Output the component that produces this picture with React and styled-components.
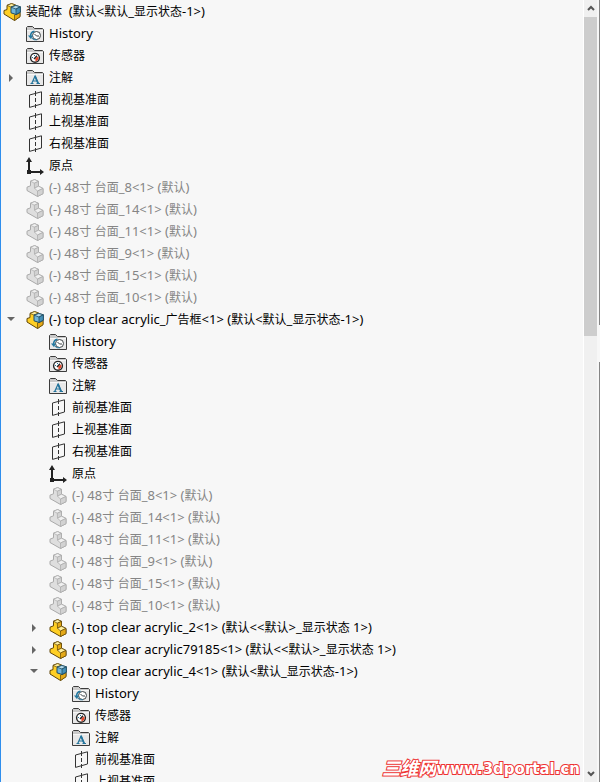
import React, { useState } from 'react';
import styled, { createGlobalStyle } from 'styled-components';

const planes = [
  { icon: 'plane', label: '前视基准面' },
  { icon: 'plane', label: '上视基准面' },
  { icon: 'plane', label: '右视基准面' },
  { icon: 'origin', label: '原点' },
];

const tableParts = ['8', '14', '11', '9', '15', '10'].map(number => ({
  icon: 'part',
  label: `(-) 48寸 台面_${number}<1> (默认)`,
  suppressed: true,
}));

const folders = [
  { icon: 'history', label: 'History' },
  { icon: 'sensor', label: '传感器' },
  { icon: 'note', label: '注解' },
];

const tree = [
  folders[0],
  folders[1],
  { ...folders[2], expandable: true },
  ...planes,
  ...tableParts,
  {
    icon: 'assembly',
    label: '(-) top clear acrylic_广告框<1> (默认<默认_显示状态-1>)',
    expandable: true,
    children: [
      ...folders,
      ...planes,
      ...tableParts,
      { icon: 'part', label: '(-) top clear acrylic_2<1> (默认<<默认>_显示状态 1>)', expandable: true },
      { icon: 'part', label: '(-) top clear acrylic79185<1> (默认<<默认>_显示状态 1>)', expandable: true },
      {
        icon: 'assembly',
        label: '(-) top clear acrylic_4<1> (默认<默认_显示状态-1>)',
        expandable: true,
        children: [...folders, ...planes],
      },
    ],
  },
];

const Folder = ({ children }) => (
  <>
    <path d="M0.5 16.5V2.5L1.5 1.5H6.5L8.5 3.5H16.5L17.5 4.5V16.5Z" fill="#c9c9c9" stroke="#3c3c3c" />
    <path d="M1 6H17V16H1Z" fill="#e8e8e8" />
    <path d="M1 5.5H17" stroke="#f7f7f7" />
    {children}
  </>
);

const HistoryIcon = () => (
  <Folder>
    <circle cx="10.5" cy="10.5" r="4" fill="#fff" stroke="#3f4548" />
    <path d="M8.5 9L10.5 11H13" fill="none" stroke="#3f4548" />
    <path d="M8.5 6.2C5.5 6.6 4.6 8.4 4.6 11" fill="none" stroke="#2579a0" strokeWidth="1.6" />
    <path d="M2 10.5H7.3L4.8 14Z" fill="#2579a0" />
    <path d="M5.5 13Q8 15.5 11 14.8" fill="none" stroke="#2579a0" />
  </Folder>
);

const SensorIcon = () => (
  <Folder>
    <circle cx="9" cy="10.8" r="4.4" fill="#fff" stroke="#252525" strokeWidth="1.4" />
    <path d="M9.2 11L12.2 9.4A3.5 3.5 0 0 1 9.5 14.4Z" fill="#e8492c" />
    <path d="M8 12L11 8.8" stroke="#252525" strokeWidth="1.4" />
    <path d="M6 10.5H7M8.5 8V9" stroke="#2579a0" />
  </Folder>
);

const NoteIcon = () => (
  <Folder>
    <path d="M5.7 14.5L9.1 7L12.2 14.5M7 12H11" fill="none" stroke="#24749c" strokeWidth="1.2" />
    <path d="M9 7L12.2 14.5" stroke="#24749c" strokeWidth="1.8" />
    <path d="M4.5 14.5H7.5M10.5 14.5H14" stroke="#24749c" />
  </Folder>
);

const PlaneIcon = () => (
  <g fill="none" stroke="#333">
    <path d="M3.5 4L15.5 0.8V13L3.5 16.4Z" />
    <path d="M9.5 0V5M9.5 7V11M9.5 13V17" />
  </g>
);

const OriginIcon = () => (
  <>
    <path d="M3 3V15H15" fill="none" stroke="#222" strokeWidth="2" />
    <path d="M3 0L6 5H0ZM18 15L14 12V18Z" fill="#222" />
    <rect x="1" y="13" width="4" height="4" fill="#222" />
  </>
);

const PartIcon = ({ suppressed }) => {
  const line = suppressed ? '#a9a9a9' : '#604608';
  const top = suppressed ? '#f0f0f0' : '#fff0a0';
  const side = suppressed ? '#dedede' : '#ffcf24';
  const dark = suppressed ? '#d2d2d2' : '#e5a917';
  return (
    <g stroke={line} strokeLinejoin="round">
      <path d="M4.5 2.2L8.7 0.6L12.5 2.4V7.2L17 9.5V14.7L11.5 17.5L1 11.5V8.2L4.5 6.8Z" fill={side} />
      <path d="M4.5 2.2L8.7 0.6L12.5 2.4L8.3 4.2Z" fill={top} strokeWidth="0.7" />
      <path d="M8.3 4.2L12.5 2.4V7.2L8.5 9.2Z" fill={dark} strokeWidth="0.7" />
      <path d="M8.5 9.2L12.5 7.2L17 9.5L11.5 12Z" fill={top} strokeWidth="0.7" />
      <path d="M11.5 12L17 9.5V14.7L11.5 17.5Z" fill={dark} strokeWidth="0.7" />
    </g>
  );
};

const AssemblyIcon = () => (
  <>
    <g stroke="#604608" strokeLinejoin="round">
      <path d="M4 2.4L8.5 0.6L12.5 2L17 9V13.7L11.5 17.5L1 11V7.5L4 6.6Z" fill="#ffcf24" />
      <path d="M4 2.4L8.5 0.6L12.5 2L8 4Z" fill="#fff0a0" strokeWidth="0.7" />
      <path d="M11.5 12L17 9.5V13.7L11.5 17.5Z" fill="#e5a917" strokeWidth="0.7" />
    </g>
    <g stroke="#204b61" strokeLinejoin="round">
      <path d="M8 4.2L12.8 2.5L17.3 3.8V9.2L13 11.5L8 9.8Z" fill="#71b6da" />
      <path d="M8 4.2L12.8 2.5L17.3 3.8L13 6Z" fill="#b5dced" strokeWidth="0.8" />
      <path d="M13 6L17.3 3.8V9.2L13 11.5Z" fill="#438fb8" strokeWidth="0.8" />
    </g>
  </>
);

const icons = {
  history: HistoryIcon,
  sensor: SensorIcon,
  note: NoteIcon,
  plane: PlaneIcon,
  origin: OriginIcon,
  part: PartIcon,
  assembly: AssemblyIcon,
};

const NodeIcon = ({ name, suppressed }) => {
  const Drawing = icons[name];
  return (
    <IconBox viewBox="0 0 18 18" aria-hidden="true">
      <Drawing suppressed={suppressed} />
    </IconBox>
  );
};

// Chinese runs are set one size smaller than the Latin around them
const NodeLabel = ({ text, suppressed }) => (
  <Label $suppressed={suppressed}>
    {text.split(/([\u4e00-\u9fff]+)/).map((part, index) => (
      index % 2 ? <Han key={index}>{part}</Han> : part
    ))}
  </Label>
);

const TreeNode = ({ node }) => {
  const { icon, label, suppressed, expandable, children } = node;
  const [open, setOpen] = useState(Boolean(children));
  return (
    <li>
      <Row>
        <ToggleSlot>
          {expandable && (
            <Toggle aria-label={label} aria-expanded={open} onClick={() => setOpen(!open)}>
              <svg width="8" height="8" viewBox="0 0 8 8">
                <path d={open ? 'M0 1H8L4 5Z' : 'M2 0L6 4L2 8Z'} fill="#666" />
              </svg>
            </Toggle>
          )}
        </ToggleSlot>
        <NodeIcon name={icon} suppressed={suppressed} />
        <NodeLabel text={label} suppressed={suppressed} />
      </Row>
      {open && children && (
        <Branch>
          {children.map(child => <TreeNode node={child} key={child.label} />)}
        </Branch>
      )}
    </li>
  );
};

const App = () => (
  <Window>
    <GlobalStyle />
    <TreePane>
      <RootRow>
        <NodeIcon name="assembly" />
        <NodeLabel text="装配体  (默认<默认_显示状态-1>)" />
      </RootRow>
      <TreeList>
        {tree.map(node => <TreeNode node={node} key={node.label} />)}
      </TreeList>
    </TreePane>
    <ScrollBar>
      <ScrollButton aria-label="Scroll up">
        <svg width="8" height="7" viewBox="0 0 8 7">
          <path d="M1 5L4 2L7 5" fill="none" stroke="#555" strokeWidth="2" />
        </svg>
      </ScrollButton>
      <ScrollThumb />
      <ScrollSpace />
      <ScrollButton aria-label="Scroll down">
        <svg width="8" height="7" viewBox="0 0 8 7">
          <path d="M1 2L4 5L7 2" fill="none" stroke="#555" strokeWidth="2" />
        </svg>
      </ScrollButton>
    </ScrollBar>
    <Edge>
      <EdgeLine $grow={325} />
      <EdgeGap />
      <EdgeLine $grow={420} />
    </Edge>
    <Watermark href="http://www.3dportal.cn">
      <span>三维网</span>www.3dportal.cn
    </Watermark>
  </Window>
);

const GlobalStyle = createGlobalStyle`
  * {
    box-sizing: border-box;
  }
  body {
    margin: 0;
    background: #f7f7f7;
    font-family: 'Noto Sans', 'Noto Sans CJK SC', sans-serif;
    font-size: 13px;
  }
  ul {
    margin: 0;
    padding: 0;
    list-style: none;
  }
  button {
    display: flex;
    align-items: center;
    justify-content: center;
    padding: 0;
    border: 0;
    background: none;
  }
`;

const Window = styled.div`
  position: relative;
  display: flex;
  height: 100vh;
  overflow: hidden;
`;

const TreePane = styled.main`
  flex: 1;
  min-width: 0;
  overflow: hidden;
  border-left: 1px solid #2f8eed;
  border-right: 1px solid #fff;
`;

const Row = styled.div`
  display: flex;
  align-items: center;
  height: 22px;
`;

const RootRow = styled(Row)`
  height: 23px;
  padding-top: 1px;
  padding-left: 2px;
`;

const TreeList = styled.ul`
  padding-left: 6px;
`;

const Branch = styled.ul`
  padding-left: 23px;
`;

const ToggleSlot = styled.div`
  flex: 0 0 19px;
`;

const Toggle = styled.button`
  width: 8px;
  height: 20px;
`;

const IconBox = styled.svg`
  flex: none;
  width: 18px;
  height: 18px;
  margin-right: 5px;
`;

const Label = styled.span`
  padding-bottom: 2px;
  color: ${props => (props.$suppressed ? '#858585' : '#000')};
  line-height: 20px;
  white-space: pre;
`;

const Han = styled.span`
  font-size: 12px;
`;

const ScrollBar = styled.div`
  display: flex;
  flex-direction: column;
  width: 13px;
  background: #f0f0f0;
`;

const ScrollButton = styled.button`
  flex: 0 0 17px;
`;

const ScrollThumb = styled.div`
  flex: 319;
  background: #cdcdcd;
`;

const ScrollSpace = styled.div`
  flex: 429;
`;

const Edge = styled.div`
  display: flex;
  flex-direction: column;
  width: 3px;
  padding-left: 2px;
`;

const EdgeLine = styled.div`
  flex: ${props => props.$grow};
  background: #858585;
`;

const EdgeGap = styled.div`
  flex: 37;
`;

const Watermark = styled.a`
  position: absolute;
  right: 20px;
  bottom: 3px;
  display: flex;
  align-items: center;
  color: #fff;
  font: bold 15px/20px 'DejaVu Sans', 'Noto Sans CJK SC', sans-serif;
  text-decoration: none;
  -webkit-text-stroke: 2px #ee3333;
  paint-order: stroke fill;
  span {
    font-size: 18px;
    font-style: italic;
  }
`;

export default App;
